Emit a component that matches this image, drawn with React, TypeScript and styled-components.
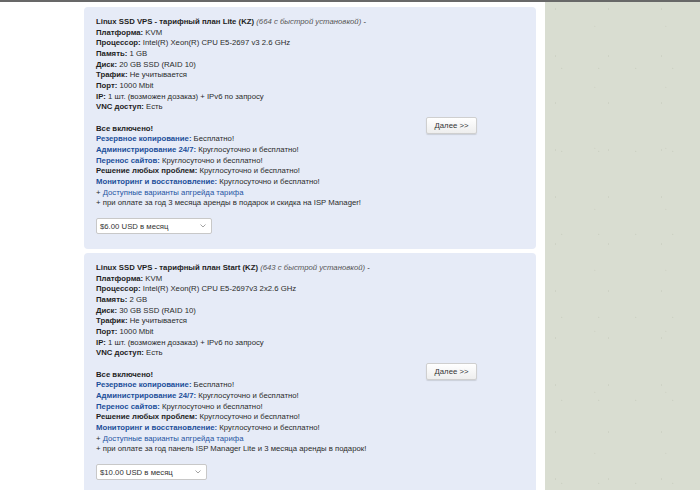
import React from "react";
import styled, { createGlobalStyle } from "styled-components";

const Global = createGlobalStyle`
  html, body { margin: 0; padding: 0; height: 100%; }
  body { font-family: "Liberation Sans", Arial, sans-serif; background: #fff; }
`;

const Page = styled.div`
  display: flex;
  min-height: 100vh;
  border-top: 2px solid #686868;
  box-sizing: border-box;
  overflow: hidden;
`;

const Main = styled.main`
  width: 545px;
  flex: none;
  background: #fff;
  padding: 5px 9px 0 84px;
  box-sizing: border-box;
  display: flex;
  flex-direction: column;
  gap: 4px;
`;

const Side = styled.aside`
  flex: 1;
  background-color: #d9ddd1;
  background-image:
    radial-gradient(circle at 20% 15%, #ced2c5 0.5px, transparent 1px),
    radial-gradient(circle at 70% 40%, #d1d5c8 0.5px, transparent 1px),
    radial-gradient(circle at 45% 80%, #cdd1c4 0.5px, transparent 1px);
  background-size: 53px 47px, 71px 61px, 37px 83px;
`;

const Card = styled.section`
  background: #e6ebf7;
  border-radius: 4px;
  padding: 10px 12px 15px 12px;
  display: grid;
  grid-template-columns: 1fr 145px;
  align-items: center;
  flex: none;
`;

const Info = styled.div`
  font-size: 7.75px;
  line-height: 10.67px;
  color: #2b2b2b;
  white-space: nowrap;
`;

const Line = styled.div<{ $gap?: boolean }>`
  margin-top: ${(p) => (p.$gap ? "10.67px" : "0")};
`;

const Label = styled.b<{ $blue?: boolean }>`
  font-weight: bold;
  color: ${(p) => (p.$blue ? "#1c4f9a" : "#1e1e1e")};
`;

const Note = styled.i`
  color: #555;
`;

const LinkText = styled.span`
  color: #1f55a3;
`;

const SelectBox = styled.div<{ $w: number }>`
  margin-top: 9px;
  width: ${(p) => p.$w}px;
  height: 16px;
  box-sizing: border-box;
  background: #fff;
  border: 1px solid #c8c8c8;
  border-radius: 2px;
  display: flex;
  align-items: center;
  justify-content: space-between;
  padding: 0 5px 0 3px;
  font-size: 7.75px;
  color: #333;
`;

const Chevron = styled.svg`
  width: 6px;
  height: 4px;
`;

const ButtonCell = styled.div`
  display: flex;
  justify-content: center;
  align-items: center;
`;

const Button = styled.button`
  width: 51px;
  height: 17px;
  padding: 0;
  font-family: "Liberation Sans", Arial, sans-serif;
  font-size: 7.75px;
  color: #333;
  background: linear-gradient(#ffffff, #eeeeee);
  border: 1px solid #cfcfcf;
  border-radius: 2px;
  box-shadow: 0 1px 1px rgba(0, 0, 0, 0.12);
`;

type Plan = {
  name: string;
  count: string;
  cpu: string;
  ram: string;
  disk: string;
  bonus: string;
  price: string;
  selW: number;
};

const plans: Plan[] = [
  {
    name: "Lite",
    count: "664",
    cpu: "Intel(R) Xeon(R) CPU E5-2697 v3 2.6 GHz",
    ram: "1 GB",
    disk: "20 GB SSD (RAID 10)",
    bonus: "+ при оплате за год 3 месяца аренды в подарок и скидка на ISP Manager!",
    price: "$6.00 USD в месяц",
    selW: 116,
  },
  {
    name: "Start",
    count: "643",
    cpu: "Intel(R) Xeon(R) CPU E5-2697v3 2x2.6 GHz",
    ram: "2 GB",
    disk: "30 GB SSD (RAID 10)",
    bonus: "+ при оплате за год панель ISP Manager Lite и 3 месяца аренды в подарок!",
    price: "$10.00 USD в месяц",
    selW: 111,
  },
];

function PlanCard({ p }: { p: Plan }) {
  return (
    <Card>
      <div>
        <Info>
          <Line>
            <Label>Linux SSD VPS - тарифный план {p.name} (KZ)</Label>{" "}
            <Note>({p.count} с быстрой установкой)</Note> -
          </Line>
          <Line><Label>Платформа:</Label> KVM</Line>
          <Line><Label>Процессор:</Label> {p.cpu}</Line>
          <Line><Label>Память:</Label> {p.ram}</Line>
          <Line><Label>Диск:</Label> {p.disk}</Line>
          <Line><Label>Трафик:</Label> Не учитывается</Line>
          <Line><Label>Порт:</Label> 1000 Mbit</Line>
          <Line><Label>IP:</Label> 1 шт. (возможен дозаказ) + IPv6 по запросу</Line>
          <Line><Label>VNC доступ:</Label> Есть</Line>
          <Line $gap><Label>Все включено!</Label></Line>
          <Line><Label $blue>Резервное копирование:</Label> Бесплатно!</Line>
          <Line><Label $blue>Администрирование 24/7:</Label> Круглосуточно и бесплатно!</Line>
          <Line><Label $blue>Перенос сайтов:</Label> Круглосуточно и бесплатно!</Line>
          <Line><Label>Решение любых проблем:</Label> Круглосуточно и бесплатно!</Line>
          <Line><Label $blue>Мониторинг и восстановление:</Label> Круглосуточно и бесплатно!</Line>
          <Line>+ <LinkText>Доступные варианты апгрейда тарифа</LinkText></Line>
          <Line>{p.bonus}</Line>
        </Info>
        <SelectBox $w={p.selW}>
          <span>{p.price}</span>
          <Chevron viewBox="0 0 6 4">
            <path d="M0.5 0.5 L3 3 L5.5 0.5" fill="none" stroke="#999" strokeWidth="0.9" />
          </Chevron>
        </SelectBox>
      </div>
      <ButtonCell>
        <Button>Далее &gt;&gt;</Button>
      </ButtonCell>
    </Card>
  );
}

export default function App() {
  return (
    <>
      <Global />
      <Page>
        <Main>
          {plans.map((p) => (
            <PlanCard key={p.name} p={p} />
          ))}
        </Main>
        <Side />
      </Page>
    </>
  );
}
